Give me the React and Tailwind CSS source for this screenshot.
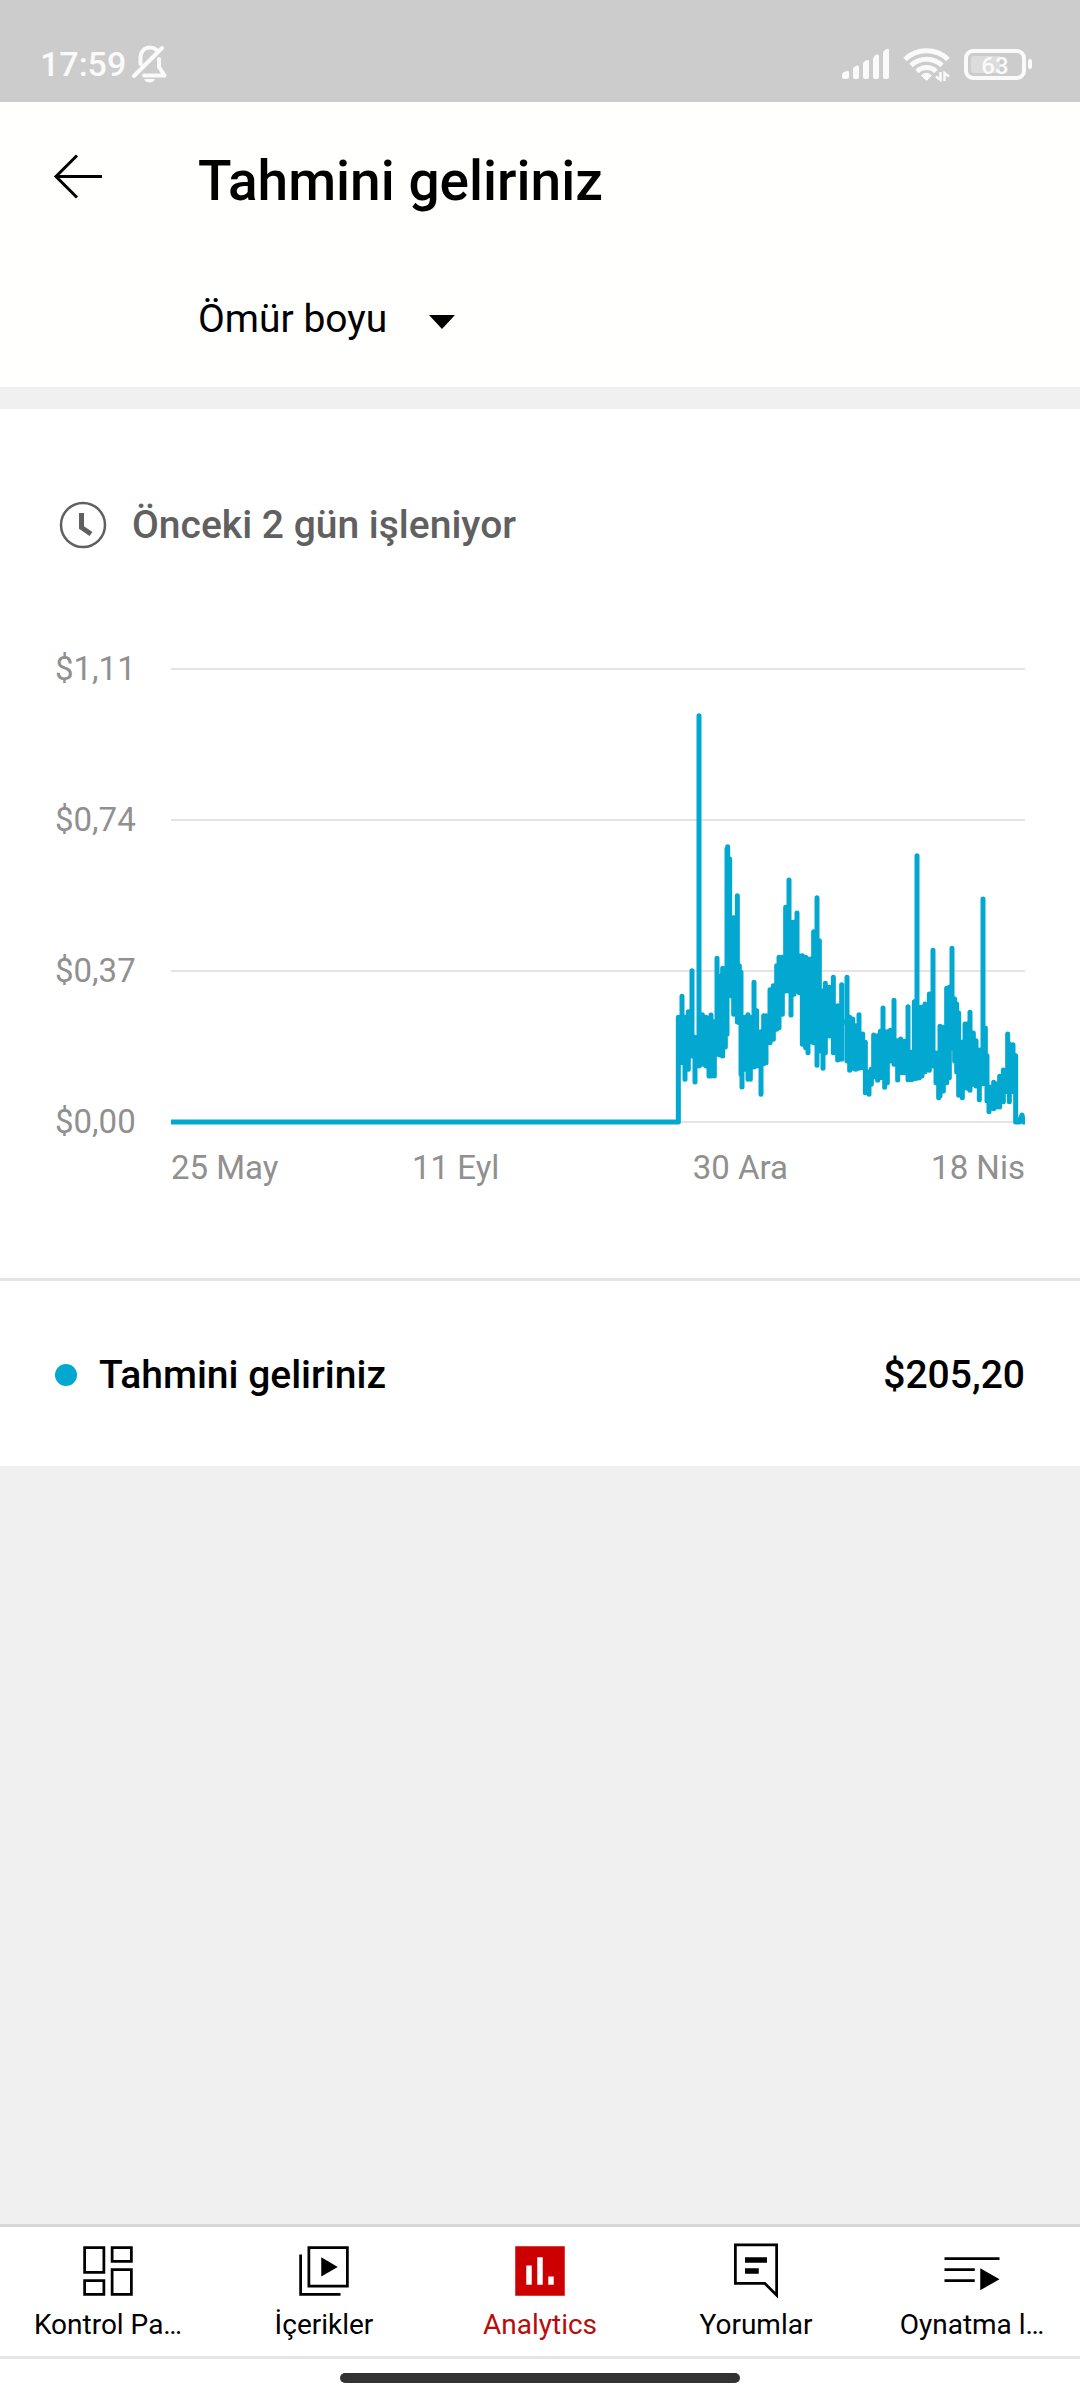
import React, { useState } from "react";

const DAYS = [
  [55, 1005, 1325], [66, 942, 1155], [75, 1005, 1205], [85, 988, 1175],
  [96, 865, 1135], [105, 1065, 1213], [117, 100, 1165], [127, 997, 1160],
  [138, 1005, 1165], [147, 1008, 1195], [153, 998, 1195], [163, 1018, 1195],
  [171, 828, 1130], [180, 882, 1132], [188, 858, 1135], [196, 870, 1108],
  [201, 500, 1070], [203, 493, 900], [209, 530, 875], [214, 706, 955],
  [221, 706, 1010], [232, 640, 1033], [238, 850, 1035], [243, 870, 1190],
  [246, 1005, 1228], [255, 1005, 1175], [264, 997, 1205], [271, 1005, 1205],
  [282, 900, 1168], [290, 985, 1165], [303, 1048, 1250], [311, 1000, 1158],
  [318, 1000, 1155], [330, 922, 1095], [340, 910, 1085], [350, 850, 1055],
  [357, 825, 1050], [367, 825, 1010], [377, 675, 940], [387, 593, 940],
  [393, 720, 1012], [402, 720, 950], [411, 692, 940], [418, 820, 945],
  [427, 820, 1100], [437, 825, 1110], [444, 830, 1125], [452, 830, 1092],
  [461, 748, 1095], [471, 646, 1163], [478, 775, 1120], [489, 925, 1172],
  [496, 903, 1125], [508, 915, 1075], [520, 885, 1125], [533, 970, 1147],
  [545, 907, 1145], [561, 885, 1150], [569, 1005, 1178], [578, 1010, 1172],
  [587, 1030, 1175], [597, 997, 1172], [608, 1055, 1170], [616, 1080, 1245],
  [627, 1168, 1250], [634, 1160, 1220], [641, 1058, 1198], [653, 1060, 1208],
  [661, 1047, 1200], [669, 977, 1200], [674, 1048, 1229], [682, 1048, 1215],
  [691, 1044, 1150], [702, 954, 1160], [713, 1075, 1207], [722, 1070, 1185],
  [733, 1077, 1185], [744, 973, 1206], [754, 1110, 1206], [763, 958, 1203],
  [771, 520, 1202], [778, 975, 1200], [786, 975, 1195], [795, 965, 1182],
  [808, 935, 1178], [819, 804, 1165], [828, 1112, 1215], [836, 1112, 1260],
  [840, 1032, 1255], [850, 1035, 1240], [860, 918, 1215], [868, 915, 1200],
  [876, 798, 1112], [884, 950, 1150], [890, 965, 1183], [896, 992, 1253],
  [907, 1080, 1260], [915, 1025, 1230], [922, 1025, 1232], [930, 990, 1238],
  [940, 1052, 1220], [948, 1075, 1225], [958, 1103, 1266], [969, 650, 1218],
  [976, 1037, 1218], [981, 1120, 1270], [987, 1213, 1302], [1001, 1200, 1293],
  [1010, 1205, 1288], [1019, 1182, 1288], [1030, 1163, 1272],
  [1043, 1055, 1242], [1048, 1085, 1272], [1059, 1087, 1242],
  [1067, 1120, 1325],
];

// Neighbouring days are joined at a level that lies inside both their ranges
const joinDays = ([, high, low], next) =>
  next ? Math.round((Math.max(high, next[1]) + Math.min(low, next[2])) / 2) : 1326;

const LINE =
  "M-1467 1326H52" +
  DAYS.map((day, i) => {
    const [x, high, low] = day;
    return `H${x}V${high + 7}V${low - 7}V${joinDays(day, DAYS[i + 1])}`;
  }).join("") +
  "H1078L1086 1305L1090 1326H1095";

const Y_LABELS = ["$1,11", "$0,74", "$0,37", "$0,00"];
const GRID_LINES = [24, 477, 930, 1383];

const BellOff = () => (
  <svg
    viewBox="0 0 36 38"
    className="w-9"
    fill="none"
    stroke="currentColor"
    strokeWidth="4"
    strokeLinecap="round"
    strokeLinejoin="round"
  >
    <path d="M2 31L30 3M8.500 19V13.500C8.500 6 13 2.500 18 2.500C20.500 2.500 22.500 3 24 4.500" />
    <path d="M27 14V22L32.500 30.500H12" />
    <path d="M12 34H23C22 36.500 20 37.500 17.500 37.500C15 37.500 13 36.500 12 34Z" fill="currentColor" stroke="none" />
  </svg>
);

const StatusBar = () => (
  <div className="flex h-[102px] items-end justify-between bg-[#cccccc] pr-12 pl-10 pb-[18px] text-[#fafafa]">
    <div className="flex items-center gap-[6px]">
      <span className="text-[34px] leading-10 font-medium">17:59</span>
      <BellOff />
    </div>
    <div className="flex h-10 items-center gap-[13px]">
      <svg viewBox="0 0 48 32" className="w-12" fill="currentColor">
        <path d="M0 29V27Q0 25 2 24L5 23Q7 22.500 7 24V29Q7 31 5 31H2Q0 31 0 29Z" />
        <path d="M11 29V21Q11 19 13 18.500L15 17.500Q17 17 17 19V29Q17 31 15 31H13Q11 31 11 29Z" />
        <path d="M21 29V16Q21 14 23 13L25 12Q27 11.500 27 13V29Q27 31 25 31H23Q21 31 21 29Z" />
        <path d="M31 29V11Q31 9 33 7.500L35 6.500Q37 6 37 8V29Q37 31 35 31H33Q31 31 31 29Z" />
        <path d="M41 29V5Q41 3 43 2L45 1Q47 0 47 2V29Q47 31 45 31H43Q41 31 41 29Z" />
      </svg>
      <svg viewBox="0 0 48 36" className="w-12" fill="none">
        <g stroke="currentColor" strokeWidth="5">
          <path d="M2 13.500A31 31 0 0 1 45 13.500" />
          <path d="M8 19.500A22.500 22.500 0 0 1 39 19.500" />
          <path d="M14 25.500A13.500 13.500 0 0 1 33 25.500" />
        </g>
        <path d="M23.500 34.500L18.500 29.500Q23.500 25 28.500 29.500Z" fill="currentColor" stroke="currentColor" strokeLinejoin="round" />
        <path d="M37.500 26V34L33 30.500M41.500 35V27L46 30.500" stroke="currentColor" strokeWidth="2.500" />
      </svg>
      <div className="flex items-center gap-[2px]">
        <div className="flex h-[31px] w-[62px] rounded-[9px] border-4 border-current p-[3px]">
          <div className="flex flex-1 items-center justify-center rounded-[3px] bg-linear-to-r from-[#dcdcdc] from-60% to-[#cccccc] to-60% pt-[3px] text-[24px] leading-4 font-medium">
            63
          </div>
        </div>
        <div className="h-[10px] w-1 rounded-sm bg-current" />
      </div>
    </div>
  </div>
);

const Header = () => {
  const [period, setPeriod] = useState("lifetime");

  return (
    <header className="bg-[#fffffe] pt-[42px] pb-11">
      <div className="flex items-start gap-[86px] px-[46px]">
        <button type="button" aria-label="Geri">
          <svg viewBox="0 0 66 66" className="w-[66px]" fill="none" stroke="currentColor" strokeWidth="3">
            <path d="M31 11.500L10 32.500L31 53.500M10 32.500H56" />
          </svg>
        </button>
        <h1 className="text-[55px] leading-[74px] font-medium">
          Tahmini geliriniz
        </h1>
      </div>
      <div className="mt-[77px] flex items-center gap-[42px] pl-[198px]">
        <select
          aria-label="Dönem"
          value={period}
          onChange={(e) => setPeriod(e.target.value)}
          className="field-sizing-content appearance-none bg-transparent text-[39px] leading-12"
        >
          <option value="lifetime">Ömür boyu</option>
        </select>
        <svg viewBox="0 0 26 20" className="w-[26px]" fill="currentColor">
          <path d="M0 6H26L13 20Z" />
        </svg>
      </div>
    </header>
  );
};

const RevenueChart = () => (
  <div className="px-[55px]">
    <div className="flex">
      <div className="flex w-[116px] shrink-0 flex-col justify-between text-[33px] leading-[18px] text-[#909090]">
        {Y_LABELS.map((label) => (
          <span key={label}>{label}</span>
        ))}
      </div>
      <svg viewBox="0 0 2562 1413" className="block min-w-0 flex-1" fill="none">
        {GRID_LINES.map((y) => (
          <rect key={y} x="0" y={y} width="2562" height="6" fill="#e4e4e4" />
        ))}
        <path
          d={LINE}
          transform="translate(1467 60)"
          stroke="#03a8d1"
          strokeWidth="15"
          strokeLinejoin="round"
        />
      </svg>
    </div>
    <div className="mt-[17px] ml-[116px] grid grid-cols-6 text-[33px] leading-10 whitespace-nowrap text-[#909090]">
      <span>25 May</span>
      <span className="col-span-2 text-center">11 Eyl</span>
      <span className="col-span-2 text-center">30 Ara</span>
      <span className="flex justify-end">18 Nis</span>
    </div>
  </div>
);

// Tab icons share a 24 unit grid
const icons = {
  dashboard: (
    <path
      d="M3.500 3.500H10.500V12.500H3.500ZM13.500 3.500H20.500V8.500H13.500ZM13.500 11.500H20.500V20.500H13.500ZM3.500 15.500H10.500V20.500H3.500Z"
      fill="none"
      stroke="currentColor"
    />
  ),
  content: (
    <>
      <path d="M6.500 3.500H20.500V17.500H6.500ZM3.500 6V20.500H18" fill="none" stroke="currentColor" />
      <path d="M11 7V14L17 10.500Z" />
    </>
  ),
  analytics: (
    <path
      d="M3 3H21V21H3ZM7 10V17H9V10ZM11 7V17H13V7ZM15 14V17H17V14Z"
      fill="#cc0000"
      fillRule="evenodd"
    />
  ),
  comments: (
    <>
      <path d="M4.500 2.500H19.500V20.800L15.200 16.500H4.500Z" fill="none" stroke="currentColor" />
      <path d="M8 7H16V9H8ZM8 11H13V13H8Z" />
    </>
  ),
  playlists: (
    <path d="M2 7H22V8H2ZM2 11H13V12H2ZM2 15H13V16H2ZM15 11L22 15L15 19Z" />
  ),
};

const TABS = [
  { id: "dashboard", label: "Kontrol Pa…" },
  { id: "content", label: "İçerikler" },
  { id: "analytics", label: "Analytics" },
  { id: "comments", label: "Yorumlar" },
  { id: "playlists", label: "Oynatma l…" },
];

const TabBar = () => {
  const [active, setActive] = useState("analytics");

  return (
    <nav className="grid grid-cols-5 border-y-3 border-t-[#d6d6d6] border-b-[#e6e6e6] bg-white">
      {TABS.map(({ id, label }) => (
        <button
          key={id}
          type="button"
          onClick={() => setActive(id)}
          className={`flex flex-col items-center gap-[5px] pt-[11px] pb-[15px] text-[28px] leading-8 ${
            active === id ? "text-[#bb0a0a]" : "text-black"
          }`}
        >
          <svg viewBox="0 0 24 24" className="w-[66px]" fill="currentColor">
            {icons[id]}
          </svg>
          {label}
        </button>
      ))}
    </nav>
  );
};

const App = () => {
  return (
    <div className="flex min-h-screen flex-col bg-[#f0f0f0] font-[Roboto,sans-serif] text-black">
      <StatusBar />
      <Header />

      <main className="mt-[22px] flex-1">
        <section className="bg-white pt-[83px]">
          <div className="mb-[102px] flex items-center gap-4 pl-[50px] text-[#606060]">
            <svg viewBox="0 0 66 66" className="w-[66px]" fill="none" stroke="currentColor">
              <circle cx="33" cy="33" r="22" strokeWidth="2.500" />
              <path d="M31.500 21V35.500L41 42" strokeWidth="5" />
            </svg>
            <p className="text-[39px] leading-[66px] font-medium">
              Önceki 2 gün işleniyor
            </p>
          </div>

          <RevenueChart />

          {/* Total */}
          <div className="mt-[90px] flex items-center border-t-3 border-[#e4e4e4] px-[55px] pt-[70px] pb-[67px] text-[39px] leading-12 font-medium">
            <span className="mr-[22px] size-[22px] rounded-full bg-[#03a8d1]" />
            <span className="flex-1">Tahmini geliriniz</span>
            <span>$205,20</span>
          </div>
        </section>
      </main>

      <TabBar />
      <div className="flex justify-center bg-white pt-[14px] pb-[17px]">
        <div className="h-[10px] w-[37%] rounded-full bg-[#333333]" />
      </div>
    </div>
  );
};

export default App;
